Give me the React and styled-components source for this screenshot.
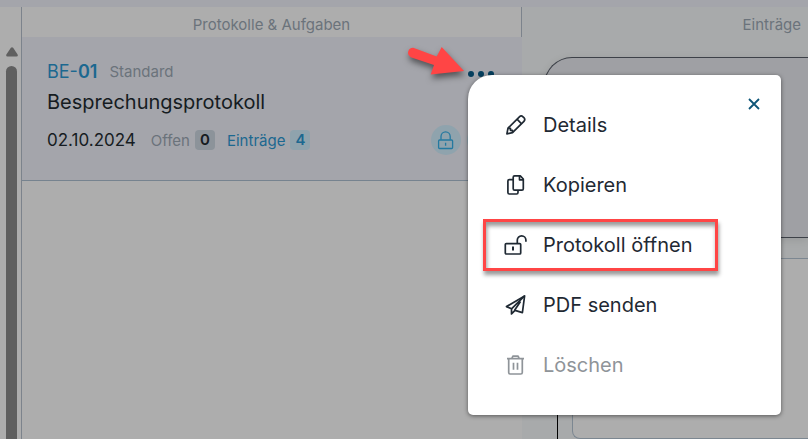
import { useState } from "react";
import styled, { createGlobalStyle } from "styled-components";

const PencilIcon = () => (
  <Icon viewBox="0 0 24 24">
    <path d="M2.9 20.9 4 15.2 15.4 3.8a2.6 2.6 0 0 1 3.6 0l.9.9a2.6 2.6 0 0 1 0 3.6L8.5 19.7z" />
    <path d="m13 6.2 4.6 4.6M4.2 15.4h2.3v1.9h2v2.2" />
  </Icon>
);

const CopyIcon = () => (
  <Icon viewBox="0 0 24 24">
    <path d="M10.6 2.9h5.7l3 3.1v9.8a1.4 1.4 0 0 1-1.4 1.4h-7.3a1.4 1.4 0 0 1-1.4-1.4V4.3a1.4 1.4 0 0 1 1.4-1.4z" />
    <path d="M15.5 3v3.8h3.7M9 6.6H5.3A1.4 1.4 0 0 0 3.9 8v11.6A1.4 1.4 0 0 0 5.3 21h7.3a1.4 1.4 0 0 0 1.4-1.4v-2.3" />
  </Icon>
);

const UnlockIcon = () => (
  <Icon viewBox="0 0 24 24">
    <rect x="1.3" y="10.6" width="15.4" height="10.4" rx="1" />
    <path d="M13.3 10.4V7.1a4.3 4.3 0 0 1 8.6 0v1.6" />
    <path d="M9 13.5v4" strokeWidth="2" />
  </Icon>
);

const SendIcon = () => (
  <Icon viewBox="0 0 24 24">
    <path d="M20.6 2.9 2.5 13.6l5 2.2v5.1l3.5-3.5 7.4 2.2z" />
    <path d="M20.6 2.9 7.5 15.8M16.500 8.500 10.6 17.2" />
  </Icon>
);

const TrashIcon = () => (
  <Icon viewBox="0 0 24 24">
    <path d="M3 5.7h17M4.7 5.7v13.8a1.5 1.5 0 0 0 1.5 1.5h10.6a1.5 1.5 0 0 0 1.5-1.5V5.7M7.8 5.5l1.1-2.4h5.2l1.1 2.4M9.5 9.8v7M13.5 9.8v7" />
  </Icon>
);

const LockIcon = () => (
  <SmallIcon viewBox="0 0 18 20">
    <rect x="1.6" y="10" width="14" height="8.5" rx="1" />
    <path d="M4 9.8V6.5a4.6 4.6 0 0 1 9.2 0v3.3M8.6 12.8v3" />
  </SmallIcon>
);

const menuItems = [
  { label: "Details", icon: PencilIcon },
  { label: "Kopieren", icon: CopyIcon },
  { label: "Protokoll öffnen", icon: UnlockIcon, marked: true },
  { label: "PDF senden", icon: SendIcon },
  { label: "Löschen", icon: TrashIcon, disabled: true },
];

function ContextMenu({ onClose }) {
  return (
    <Menu>
      <CloseButton type="button" aria-label="Schließen" onClick={onClose}>
        <svg viewBox="0 0 12 12" width="12" height="12">
          <path d="m1 1 10 10M11 1 1 11" stroke="currentColor" strokeWidth="1.8" />
        </svg>
      </CloseButton>
      {menuItems.map(({ label, icon: ItemIcon, marked, disabled }) => (
        <MenuItem key={label} type="button" disabled={disabled} $marked={marked}>
          <ItemIcon />
          {label}
        </MenuItem>
      ))}
    </Menu>
  );
}

function ProtocolCard() {
  const [open, setOpen] = useState(true);

  return (
    <Card>
      <CardTop>
        <Code href="#be-01">
          BE-<b>01</b>
        </Code>
        <Muted>Standard</Muted>
        <MenuAnchor>
          <DotsButton
            type="button"
            aria-label="Menü"
            onClick={() => setOpen(!open)}
          >
            <Dot />
            <Dot />
            <Dot />
          </DotsButton>
          <Pointer viewBox="0 0 68 44">
            <path d="M11.3 10.8a5 5 0 0 0-2.6 9.4L32 28l-3.3 9.6L62 34 39.700 10 34.700 19.500z" />
          </Pointer>
          {open && <ContextMenu onClose={() => setOpen(false)} />}
        </MenuAnchor>
      </CardTop>
      <Title>Besprechungsprotokoll</Title>
      <CardBottom>
        <DateText>02.10.2024</DateText>
        <Counts>
          <Count>
            Offen <Badge>0</Badge>
          </Count>
          <Count $blue>
            Einträge <Badge $blue>4</Badge>
          </Count>
        </Counts>
        <Status>
          <Round>
            <LockIcon />
          </Round>
          <Round />
        </Status>
      </CardBottom>
    </Card>
  );
}

function App() {
  return (
    <Page>
      <GlobalStyle />
      <Gutter>
        <svg viewBox="0 0 14 10" width="14" height="10">
          <path d="M5.7 1Q7-.5 8.3 1l4.3 6.500Q13.4 9.500 11.5 9.500h-9Q.6 9.500 1.4 7.500z" fill="#5f5f5f" />
        </svg>
        <Thumb />
      </Gutter>
      <List>
        <Header $line>Protokolle &amp; Aufgaben</Header>
        <ProtocolCard />
      </List>
      <Entries>
        <Header $end>Einträge</Header>
        <Group />
        <Branch>
          <Entry />
        </Branch>
      </Entries>
    </Page>
  );
}

const GlobalStyle = createGlobalStyle`
  * {
    box-sizing: border-box;
  }
  body {
    margin: 0;
    background: #adadad;
    font-family: Inter, "Liberation Sans", sans-serif;
  }
  button {
    font: inherit;
    background: none;
    border: 0;
    padding: 0;
    cursor: pointer;
  }
`;

const Page = styled.div`
  display: grid;
  grid-template-columns: 22px minmax(0, 500px) minmax(0, 1fr);
  min-height: 100vh;
  border-top: 7px solid #a4a5ab;
`;

const Gutter = styled.div`
  display: flex;
  flex-direction: column;
  gap: 9px;
  padding: 40px 4px 0 5px;
  border-right: 1px solid #7c838c;
`;

const Thumb = styled.div`
  flex: 1;
  width: 11px;
  margin-left: 1px;
  border-radius: 6px 6px 0 0;
  background: #5f5f5f;
`;

const List = styled.section`
  background: #adadad;
`;

const Header = styled.header`
  display: flex;
  align-items: center;
  justify-content: ${(props) => (props.$end ? "flex-end" : "center")};
  height: 30px;
  padding: 4px ${(props) => (props.$end ? "7px" : "0")} 0;
  font-size: 15px;
  color: #6b737b;
  border-right: ${(props) => (props.$line ? "1px solid #7c838c" : "0")};
`;

const Card = styled.article`
  padding: 22px 25px 25px;
  background: #a4a5ab;
  border-bottom: 1px solid #76838f;
`;

const CardTop = styled.div`
  display: flex;
  align-items: center;
  gap: 12px;
  height: 24px;
  padding-right: 3px;
`;

const Code = styled.a`
  font-size: 18px;
  color: #1c6890;
  text-decoration: none;

  b {
    font-weight: 600;
  }
`;

const Muted = styled.span`
  font-size: 15px;
  color: #6b737b;
`;

const MenuAnchor = styled.div`
  position: relative;
  margin-left: auto;
`;

const DotsButton = styled.button`
  display: flex;
  align-items: center;
  gap: 4px;
  height: 20px;
  margin-top: 5px;
`;

const Dot = styled.span`
  width: 6px;
  height: 6px;
  border-radius: 50%;
  background: #063f5e;
`;

const Pointer = styled.svg`
  position: absolute;
  right: 24px;
  top: -22px;
  width: 68px;
  height: 44px;
  overflow: visible;
  fill: #ff4545;
  filter: drop-shadow(1px 4px 3px rgba(0, 0, 0, 0.5));
`;

const Menu = styled.div`
  position: absolute;
  z-index: 2;
  top: 16px;
  left: 0;
  width: 313px;
  display: flex;
  flex-direction: column;
  align-items: flex-start;
  gap: 8px;
  padding: 24px 15px;
  border-radius: 24px 5px 5px 5px;
  background: #fff;
  box-shadow: 0 1px 4px rgba(0, 0, 0, 0.5);
`;

const CloseButton = styled.button`
  position: absolute;
  top: 18px;
  right: 16px;
  display: grid;
  place-items: center;
  width: 22px;
  height: 22px;
  color: #0d5577;
`;

const MenuItem = styled.button`
  display: flex;
  align-items: center;
  gap: 15px;
  height: 52px;
  padding: 0 23px 0 18px;
  border: 3px solid ${(props) => (props.$marked ? "#ff4545" : "transparent")};
  box-shadow: ${(props) =>
    props.$marked
      ? "1px 4px 4px rgba(0, 0, 0, 0.4), inset 1px 4px 4px rgba(0, 0, 0, 0.4)"
      : "none"};
  font-size: 20px;
  white-space: nowrap;
  color: #1f2933;

  &:disabled {
    color: #8f9499;
    cursor: default;
  }
`;

const Icon = styled.svg`
  flex: none;
  width: 24px;
  height: 24px;
  fill: none;
  stroke: currentColor;
  stroke-width: 1.7;
  stroke-linejoin: round;
`;

const SmallIcon = styled.svg`
  width: 18px;
  height: 20px;
  fill: none;
  stroke: #2479a0;
  stroke-width: 1.3;
`;

const Title = styled.h2`
  margin: 6px 0 0;
  font-size: 20px;
  line-height: 26px;
  font-weight: 400;
  color: #161c22;
`;

const CardBottom = styled.div`
  display: flex;
  align-items: center;
  height: 30px;
  margin-top: 10px;
  gap: 15px;
`;

const DateText = styled.time`
  font-size: 17px;
  color: #161c22;
`;

const Counts = styled.div`
  display: flex;
  gap: 12px;
`;

const Count = styled.span`
  display: flex;
  align-items: center;
  gap: 5px;
  font-size: 15px;
  color: ${(props) => (props.$blue ? "#1c6890" : "#6b737b")};
`;

const Badge = styled.b`
  width: 20px;
  border-radius: 4px;
  font-weight: 600;
  line-height: 20px;
  text-align: center;
  color: ${(props) => (props.$blue ? "#1c6890" : "#161c22")};
  background: ${(props) => (props.$blue ? "#8fa3ad" : "#8c939a")};
`;

const Status = styled.div`
  display: flex;
  gap: 6px;
  margin-left: auto;
`;

const Round = styled.span`
  display: grid;
  place-items: center;
  width: 30px;
  height: 30px;
  border-radius: 50%;
  background: #8fa3ad;
`;

const Entries = styled.section`
  background: #a8aaab;
`;

const Group = styled.div`
  height: 181px;
  margin: 20px 0 0 22px;
  border: 1px solid #3d4148;
  border-right: 0;
  border-radius: 28px 0 0 28px;
  background: #9fa0a4;
  box-shadow: 0 2px 8px rgba(0, 0, 0, 0.1);
`;

const Branch = styled.div`
  margin-left: 35px;
  padding: 20px 0 0 14px;
  border-left: 1px solid #000;
`;

const Entry = styled.div`
  height: 181px;
  border: 1px solid #7c8791;
  border-right: 0;
  border-radius: 8px 0 0 8px;
  background: #adadad;
`;

export default App;
